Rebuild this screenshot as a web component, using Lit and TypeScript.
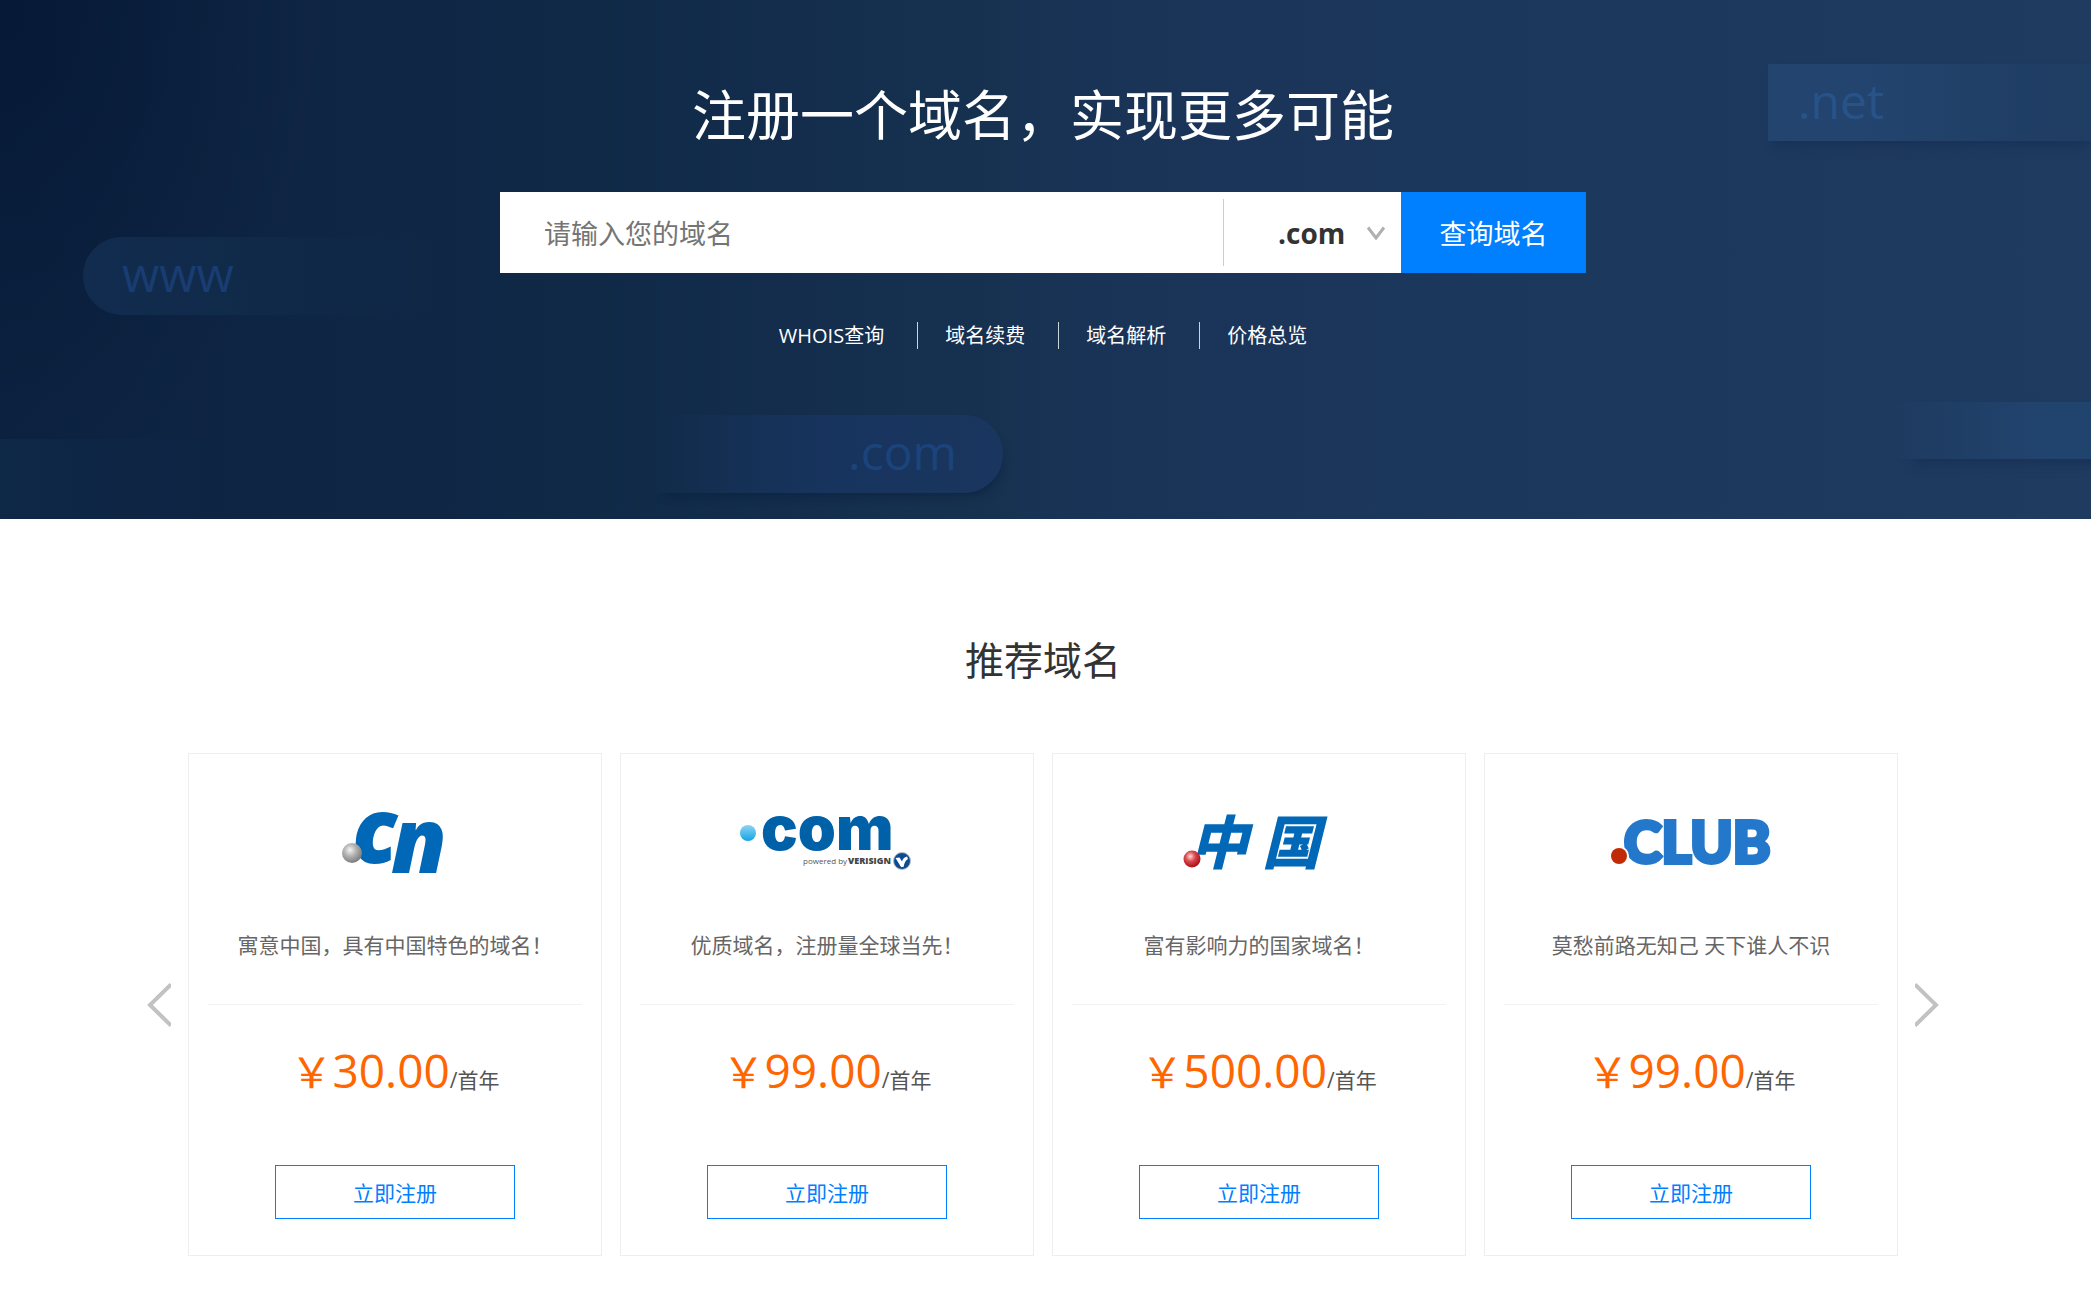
import { LitElement, html, css, svg, TemplateResult } from "lit";
import { customElement, property, state } from "lit/decorators.js";

interface Offer {
  logo: TemplateResult;
  slogan: string;
  price: string;
}

const cnLogo = html`<svg class="logo" viewBox="0 0 200 100" role="img" aria-label="cn">
  <defs>
    <radialGradient id="silver" cx="0.4" cy="0.35" r="0.65">
      <stop offset="0" stop-color="#f4f4f4" />
      <stop offset="0.45" stop-color="#b5b5b5" />
      <stop offset="1" stop-color="#7d7d7d" />
    </radialGradient>
  </defs>
  <text class="cn" x="57" y="73">c<tspan x="96" y="83">n</tspan></text>
  <circle cx="57" cy="63" r="10" fill="url(#silver)" />
</svg>`;

const comLogo = html`<svg class="logo" viewBox="0 0 200 100" role="img" aria-label="com">
  <defs>
    <linearGradient id="sky" x1="0" y1="0" x2="0" y2="1">
      <stop offset="0" stop-color="#8fd3f5" />
      <stop offset="1" stop-color="#12a5e2" />
    </linearGradient>
  </defs>
  <circle cx="21" cy="43" r="8" fill="url(#sky)" />
  <text class="com" x="34" y="60">com</text>
  <text class="powered" x="76" y="74">powered by</text>
  <text class="verisign" x="121" y="74">VERISIGN</text>
  <circle cx="175" cy="71" r="8.5" fill="#0c4a94" stroke="#b9c0c8" stroke-width="1" />
  <path d="M168.5 68 L172.5 67.5 L175 71.5 Q176 67.5 180 66.5 L181 69 Q178 70 176.5 77 L174 77 Z" fill="#fff" />
</svg>`;

const zhongguoLogo = html`<svg class="logo" viewBox="0 0 200 100" role="img" aria-label="中国">
  <defs>
    <radialGradient id="ruby" cx="0.4" cy="0.35" r="0.65">
      <stop offset="0" stop-color="#ffd9d9" />
      <stop offset="0.45" stop-color="#d94a4e" />
      <stop offset="1" stop-color="#a80f14" />
    </radialGradient>
  </defs>
  <text class="zh" x="31" y="74">中<tspan x="103">国</tspan></text>
  <circle cx="33" cy="69" r="8.5" fill="url(#ruby)" />
</svg>`;

const clubLogo = html`<svg class="logo" viewBox="0 0 200 100" role="img" aria-label="club">
  <text class="club" x="33" y="73">CLUB</text>
  <circle cx="28" cy="66" r="10" fill="#fff" />
  <circle cx="28" cy="66" r="8" fill="#c12a06" />
</svg>`;

const offers: Offer[] = [
  { logo: cnLogo, slogan: "寓意中国，具有中国特色的域名！", price: "30.00" },
  { logo: comLogo, slogan: "优质域名，注册量全球当先！", price: "99.00" },
  { logo: zhongguoLogo, slogan: "富有影响力的国家域名！", price: "500.00" },
  { logo: clubLogo, slogan: "莫愁前路无知己 天下谁人不识", price: "99.00" },
];

const shortcuts = ["WHOIS查询", "域名续费", "域名解析", "价格总览"];

@customElement("domain-card")
export class DomainCard extends LitElement {
  @property({ attribute: false }) offer!: Offer;

  static styles = css`
    :host {
      display: block;
      min-width: 0;
    }
    .card {
      display: flex;
      flex-direction: column;
      align-items: center;
      padding: 36px 19px;
      border: 1px solid #eeeeee;
      background: #fff;
    }
    .logo {
      display: block;
      width: 200px;
      height: 100px;
      overflow: visible;
    }
    .cn {
      font: italic 800 90px "Open Sans", sans-serif;
      fill: #0068b7;
    }
    .com {
      font: 900 61px Inter, sans-serif;
      fill: #0061a8;
    }
    .powered {
      font: 8px "Open Sans", sans-serif;
      fill: #555;
    }
    .verisign {
      font: 800 9px "Open Sans", sans-serif;
      fill: #444;
    }
    .zh {
      font: italic 900 58px "Noto Sans CJK SC", sans-serif;
      fill: #0068b7;
    }
    .club {
      font: 900 57px Lato, sans-serif;
      fill: #2378cb;
      stroke: #2378cb;
      stroke-width: 4;
    }
    .slogan {
      align-self: stretch;
      margin: 39px 0 0;
      padding-bottom: 43px;
      border-bottom: 1px solid #f2f2f2;
      text-align: center;
      font-size: 21px;
      line-height: 32px;
      color: #666;
    }
    .price {
      display: flex;
      align-items: baseline;
      height: 64px;
      margin: 35px 0 61px;
      line-height: 60px;
      font-size: 21px;
      color: #555;
      white-space: nowrap;
    }
    .yen,
    .amount {
      color: #ff6600;
    }
    .yen {
      font-size: 42px;
    }
    .amount {
      font-size: 46px;
    }
    .register {
      box-sizing: border-box;
      width: 240px;
      height: 54px;
      padding: 0;
      border: 1px solid #0080ff;
      background: #fff;
      color: #0080ff;
      font: inherit;
      font-size: 21px;
      cursor: pointer;
    }
  `;

  render() {
    const { logo, slogan, price } = this.offer;
    return html`<article class="card">
      ${logo}
      <p class="slogan">${slogan}</p>
      <p class="price"><span class="yen">￥</span><span class="amount">${price}</span><span>/首年</span></p>
      <button class="register" type="button">立即注册</button>
    </article>`;
  }
}

@customElement("app-root")
export class AppRoot extends LitElement {
  @state() private suffix = ".com";

  static styles = css`
    :host {
      display: block;
      font-family: "Open Sans", "Noto Sans CJK SC", sans-serif;
      color: #333;
      background: #fff;
    }
    .hero {
      position: relative;
      overflow: hidden;
      display: flex;
      flex-direction: column;
      align-items: center;
      padding: 76px 5px 170px 0;
      background:
        radial-gradient(ellipse 320px 480px at 0 0, rgba(3, 22, 50, 0.7), rgba(3, 22, 50, 0)),
        linear-gradient(90deg, #0c2240 0%, #0f2544 14%, #0f2947 28%, #142d4d 38%, #16314f 46%, #1a3458 54%, #1c375c 70%, #1f3b60 100%);
      color: #fff;
    }
    .tag {
      position: absolute;
      box-sizing: border-box;
      display: flex;
      align-items: center;
      height: 78px;
      font-size: 48px;
      line-height: 72px;
      font-weight: 500;
      padding-bottom: 4px;
    }
    .tag-www {
      left: 83px;
      top: 237px;
      width: 360px;
      padding-left: 39px;
      border-radius: 39px 0 0 39px;
      background: linear-gradient(90deg, #122c50, rgba(17, 43, 75, 0.9) 40%, rgba(15, 41, 71, 0));
      color: #193d72;
    }
    .tag-com {
      left: 655px;
      top: 415px;
      width: 348px;
      justify-content: flex-end;
      padding-right: 46px;
      border-radius: 0 39px 39px 0;
      background: linear-gradient(90deg, rgba(25, 53, 95, 0), #17345e 50%, #1a365f);
      box-shadow: 4px 8px 10px -6px rgba(8, 28, 56, 0.6);
      color: #1b447c;
    }
    .tag-net {
      right: 0;
      top: 64px;
      width: 323px;
      height: 77px;
      padding-left: 30px;
      background: linear-gradient(90deg, #22446e 30%, rgba(34, 66, 106, 0.2));
      box-shadow: 2px 8px 10px -4px rgba(20, 44, 78, 0.6);
      color: #275389;
    }
    .tag-corner {
      left: 0;
      bottom: 0;
      width: 214px;
      height: 80px;
      background: linear-gradient(90deg, #0e2847, rgba(15, 36, 68, 0.6));
    }
    .tag-edge {
      right: 0;
      top: 402px;
      width: 201px;
      height: 57px;
      background: linear-gradient(90deg, rgba(33, 68, 110, 0), #21446f 80%);
      box-shadow: 20px 8px 10px -4px rgba(20, 44, 78, 0.6);
    }
    .headline {
      position: relative;
      margin: 0;
      font-size: 54px;
      line-height: 78px;
      font-weight: 400;
    }
    .search {
      position: relative;
      display: flex;
      width: 100%;
      max-width: 1086px;
      height: 81px;
      margin-top: 38px;
      background: #fff;
    }
    .name {
      flex: 1;
      min-width: 0;
      padding: 2px 44px 0;
      border: 0;
      outline: 0;
      background: none;
      color: #333;
      font: inherit;
      font-size: 27px;
    }
    .name::placeholder {
      color: #757575;
      opacity: 1;
    }
    .suffix {
      display: grid;
      align-items: center;
      width: 178px;
      height: 67px;
      margin: auto 0;
      box-sizing: border-box;
      border-left: 1px solid #ccc;
    }
    .suffix-select,
    .chevron {
      grid-area: 1 / 1;
    }
    .suffix-select {
      appearance: none;
      width: 100%;
      height: 100%;
      padding: 0 40px 0 54px;
      border: 0;
      outline: 0;
      background: none;
      color: #333;
      font: inherit;
      font-size: 28px;
      font-weight: 700;
    }
    .chevron {
      justify-self: end;
      margin-right: 15px;
      width: 20px;
      height: 14px;
      pointer-events: none;
    }
    .submit {
      width: 185px;
      padding: 0;
      border: 0;
      background: #0080ff;
      color: #fff;
      font: inherit;
      font-size: 27px;
      cursor: pointer;
    }
    .shortcuts {
      position: relative;
      display: flex;
      margin-top: 49px;
    }
    .shortcut {
      padding: 0 33px 0 27px;
      border-left: 1px solid #ccd3dc;
      color: #fff;
      font-size: 20px;
      line-height: 27px;
      text-decoration: none;
    }
    .shortcut:first-child {
      padding-left: 0;
      border-left: 0;
    }
    .shortcut:last-child {
      padding-right: 0;
    }
    .recommend {
      display: flex;
      flex-direction: column;
      align-items: center;
      padding: 111px 5px 42px 0;
    }
    .title {
      margin: 0;
      font-size: 39px;
      line-height: 60px;
      font-weight: 400;
    }
    .carousel {
      display: flex;
      align-items: center;
      gap: 17px;
      width: 100%;
      max-width: 1792px;
      margin-top: 63px;
    }
    .cards {
      flex: 1;
      min-width: 0;
      display: grid;
      grid-template-columns: repeat(4, minmax(0, 1fr));
      gap: 18px;
    }
    .arrow {
      width: 24px;
      height: 44px;
      padding: 0;
      border: 0;
      background: none;
      cursor: pointer;
    }
    .arrow-icon {
      display: block;
      width: 24px;
      height: 44px;
    }
  `;

  private arrow(label: string, d: string) {
    return html`<button class="arrow" type="button" aria-label=${label}>
      <svg class="arrow-icon" viewBox="0 0 24 44">
        ${svg`<path d=${d} fill="none" stroke="#c2c2c2" stroke-width="4" />`}
      </svg>
    </button>`;
  }

  private pickSuffix(event: Event) {
    this.suffix = (event.target as HTMLSelectElement).value;
  }

  render() {
    return html`
      <header class="hero">
        <div class="tag tag-www" aria-hidden="true">www</div>
        <div class="tag tag-com" aria-hidden="true">.com</div>
        <div class="tag tag-net" aria-hidden="true">.net</div>
        <div class="tag tag-corner" aria-hidden="true"></div>
        <div class="tag tag-edge" aria-hidden="true"></div>
        <h1 class="headline">注册一个域名，实现更多可能</h1>
        <form class="search" @submit=${(e: Event) => e.preventDefault()}>
          <input class="name" type="text" aria-label="域名" placeholder="请输入您的域名" />
          <div class="suffix">
            <select class="suffix-select" aria-label="域名后缀" .value=${this.suffix} @change=${this.pickSuffix}>
              <option>.com</option>
            </select>
            <svg class="chevron" viewBox="0 0 20 14" aria-hidden="true">
              <path d="M2 1.5 L10 12 L18 1.5" fill="none" stroke="#b0b0b0" stroke-width="3" />
            </svg>
          </div>
          <button class="submit" type="submit">查询域名</button>
        </form>
        <nav class="shortcuts">
          ${shortcuts.map((text) => html`<a class="shortcut" href="#">${text}</a>`)}
        </nav>
      </header>
      <section class="recommend">
        <h2 class="title">推荐域名</h2>
        <div class="carousel">
          ${this.arrow("上一组", "M24 1.5 L3 22 L24 42.5")}
          <div class="cards">
            ${offers.map((offer) => html`<domain-card .offer=${offer}></domain-card>`)}
          </div>
          ${this.arrow("下一组", "M0 1.5 L21 22 L0 42.5")}
        </div>
      </section>
    `;
  }
}
